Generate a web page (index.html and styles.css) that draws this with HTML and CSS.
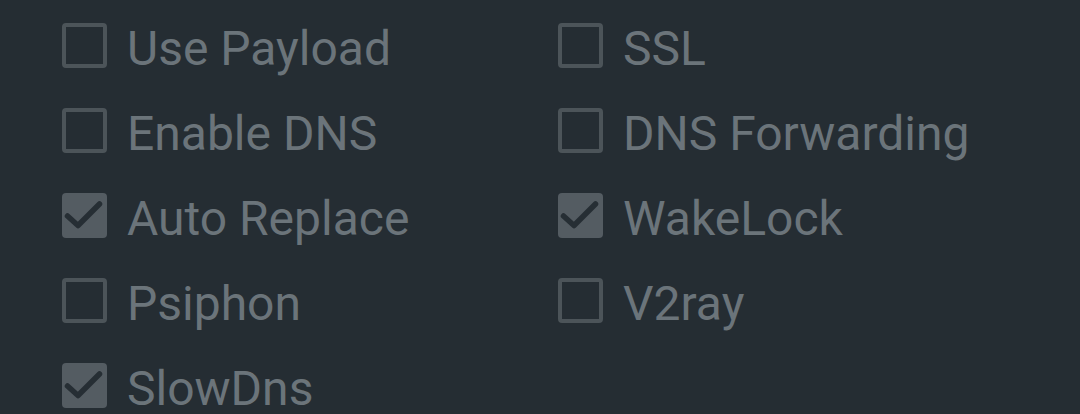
FILE: index.html
```html
<!DOCTYPE html>
<html>
<head>
<meta charset="utf-8">
<link rel="stylesheet" href="styles.css">
</head>
<body>
<div class="options">
  <label class="opt"><span class="box"></span><span class="lbl">Use Payload</span></label>
  <label class="opt"><span class="box"></span><span class="lbl">SSL</span></label>
  <label class="opt"><span class="box"></span><span class="lbl">Enable DNS</span></label>
  <label class="opt"><span class="box"></span><span class="lbl">DNS Forwarding</span></label>
  <label class="opt"><span class="box checked"><svg viewBox="0 0 45 45" width="45" height="45"><path d="M5.5 23 L16 32.5 L37.5 11" /></svg></span><span class="lbl">Auto Replace</span></label>
  <label class="opt"><span class="box checked"><svg viewBox="0 0 45 45" width="45" height="45"><path d="M5.5 23 L16 32.5 L37.5 11" /></svg></span><span class="lbl">WakeLock</span></label>
  <label class="opt"><span class="box"></span><span class="lbl">Psiphon</span></label>
  <label class="opt"><span class="box"></span><span class="lbl">V2ray</span></label>
  <label class="opt"><span class="box checked"><svg viewBox="0 0 45 45" width="45" height="45"><path d="M5.5 23 L16 32.5 L37.5 11" /></svg></span><span class="lbl">SlowDns</span></label>
</div>
</body>
</html>
```
FILE: styles.css
```css
html, body {
  margin: 0;
  padding: 0;
  background: #252d33;
  width: 1080px;
  height: 414px;
  overflow: hidden;
}
.options {
  display: grid;
  grid-template-columns: 496px 1fr;
  grid-auto-rows: 85px;
  padding: 3px 0 0 62px;
}
.opt {
  display: flex;
  align-items: center;
  gap: 20px;
}
.box {
  box-sizing: border-box;
  width: 45px;
  height: 45px;
  border: 4px solid #4c5459;
  border-radius: 4px;
  flex: none;
  display: flex;
}
.box.checked {
  border: none;
  background: #545c62;
}
.box svg path {
  fill: none;
  stroke: #262e34;
  stroke-width: 5.5;
  stroke-linecap: round;
  stroke-linejoin: round;
}
.lbl {
  font-family: Roboto, "Noto Sans", sans-serif;
  font-size: 48px;
  color: #6b747a;
  line-height: 1;
  padding-top: 6px;
}
```
